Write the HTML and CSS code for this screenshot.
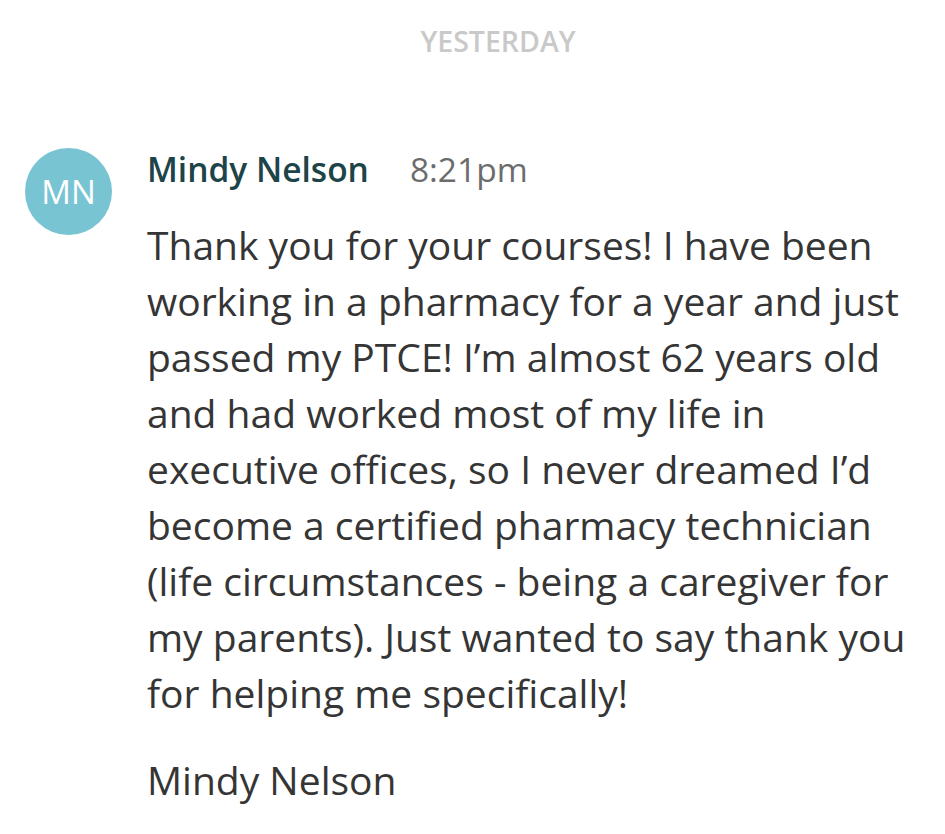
FILE: index.html
```html
<!DOCTYPE html>
<html>
<head>
<meta charset="utf-8">
<link rel="stylesheet" href="styles.css">
</head>
<body>
<div class="page">
  <div class="day">YESTERDAY</div>
  <div class="message">
    <div class="avatar">MN</div>
    <div class="content">
      <div class="header">
        <span class="name">Mindy Nelson</span>
        <span class="time">8:21pm</span>
      </div>
      <p class="body">Thank you for your courses! I have been working in a pharmacy for a year and just passed my PTCE! I’m almost 62 years old and had worked most of my life in executive offices, so I never dreamed I’d become a certified pharmacy technician (life circumstances - being a caregiver for my parents). Just wanted to say thank you for helping me specifically!</p>
      <p class="body sig">Mindy Nelson</p>
    </div>
  </div>
</div>
</body>
</html>
```
FILE: styles.css
```css
html, body {
  margin: 0;
  padding: 0;
  background: #ffffff;
}
.page {
  width: 945px;
  height: 834px;
  overflow: hidden;
  font-family: "Open Sans", "Liberation Sans", sans-serif;
}
.day {
  text-align: center;
  padding-top: 23px;
  padding-left: 51px;
  font-size: 28.5px;
  font-weight: 600;
  color: #c9c9c9;
  line-height: 36px;
}
.message {
  display: flex;
  gap: 35px;
  padding: 86px 0 0 25px;
}
.avatar {
  flex: none;
  width: 87px;
  height: 87px;
  margin-top: 3px;
  border-radius: 50%;
  background: #78c4d3;
  color: #ffffff;
  font-size: 33px;
  font-weight: 400;
  display: flex;
  align-items: center;
  justify-content: center;
}
.content {
  width: 790px;
}
.header {
  display: flex;
  align-items: baseline;
  gap: 41px;
  line-height: 48px;
}
.name {
  font-size: 33.5px;
  font-weight: 600;
  color: #1d4448;
}
.time {
  font-size: 33.5px;
  color: #6c6c6c;
}
.body {
  margin: 24px 0 0;
  font-size: 39px;
  line-height: 56px;
  color: #353535;
  width: 775px;
}
.sig {
  margin-top: 31px;
}
```
